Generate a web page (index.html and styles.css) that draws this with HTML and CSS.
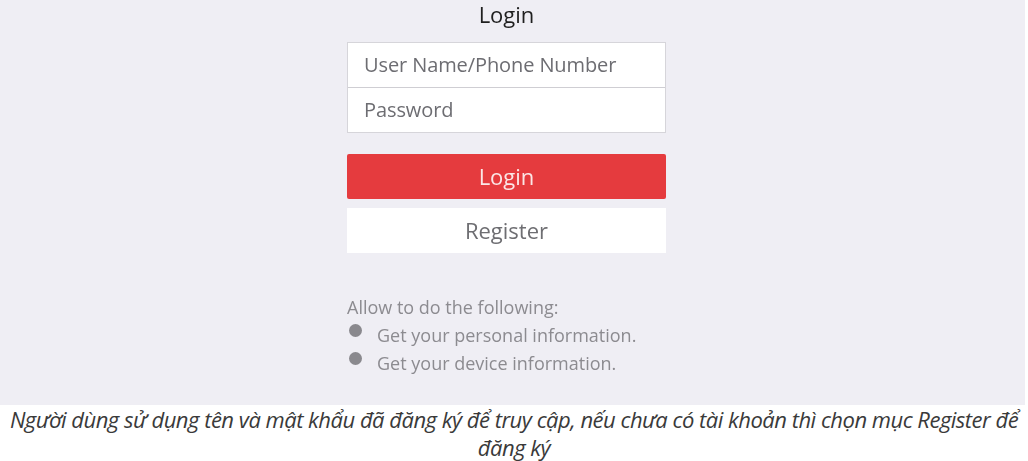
FILE: index.html
```html
<!DOCTYPE html>
<html lang="vi">

<head>
    <meta charset="UTF-8">
    <meta name="viewport" content="width=device-width, initial-scale=1.0">
    <title>Đăng nhập</title>
    <link rel="stylesheet" href="styles.css">
</head>

<body>
    <figure class="figure">
        <div class="shot">
            <div class="panel">
                <h2 class="title">Login</h2>
                <div class="fields">
                    <div class="field">User Name/Phone Number</div>
                    <div class="field">Password</div>
                </div>
                <div class="btn btn-login">Login</div>
                <div class="btn btn-register">Register</div>

                <div class="allow">
                    <p class="allow-head">Allow to do the following:</p>
                    <p class="allow-item"><span class="dot"></span>Get your personal information.</p>
                    <p class="allow-item"><span class="dot"></span>Get your device information.</p>
                </div>
            </div>
        </div>
        <figcaption class="caption">Người dùng sử dụng tên và mật khẩu đã đăng ký để truy cập, nếu chưa có tài khoản thì chọn mục Register để đăng ký</figcaption>
    </figure>
</body>

</html>
```

FILE: styles.css
```css
body {
    margin: 0;
    background-color: #ffffff;
    font-family: 'Open Sans', 'Noto Sans', sans-serif;
}

.figure {
    margin: 0;
}

.shot {
    height: 405px;
    width: 1025px;
    background-color: #efeef4;
    display: flex;
    justify-content: center;
    font-family: 'Open Sans', 'Noto Sans', sans-serif;
}

.panel {
    width: 319px;
    margin-left: -12px;
    display: flex;
    flex-direction: column;
    filter: blur(0.4px);
}

.title {
    margin: 0;
    height: 42px;
    text-align: center;
    font-size: 22px;
    font-weight: normal;
    line-height: 29px;
    color: #1f1f1f;
}

.fields {
    border: 1px solid #d6d5da;
    background-color: #ffffff;
}

.field {
    height: 44px;
    padding-left: 16px;
    font-size: 20px;
    line-height: 44px;
    color: #6d6d72;
    letter-spacing: -0.1px;
}

.field + .field {
    border-top: 1px solid #cfced3;
}

.btn {
    height: 45px;
    text-align: center;
    font-size: 22px;
    line-height: 45px;
}

.btn-login {
    margin-top: 21px;
    background-color: #e53b3e;
    color: #fbe6e6;
    border-radius: 2px;
}

.btn-register {
    margin-top: 9px;
    background-color: #ffffff;
    color: #6e6e72;
}

.allow {
    margin-top: 40px;
    color: #8c8b90;
    font-size: 18px;
}

.allow p {
    margin: 0;
    line-height: 28px;
}

.allow-item {
    display: flex;
    align-items: center;
}

.dot {
    width: 13px;
    height: 13px;
    border-radius: 50%;
    background-color: #8a898e;
    margin-left: 2px;
    margin-right: 15px;
    margin-top: -9px;
}

.caption {
    padding: 0 4px;
    text-align: center;
    font-style: italic;
    font-size: 22px;
    line-height: 28px;
    letter-spacing: -0.5px;
    color: #3a3a3a;
}
```
